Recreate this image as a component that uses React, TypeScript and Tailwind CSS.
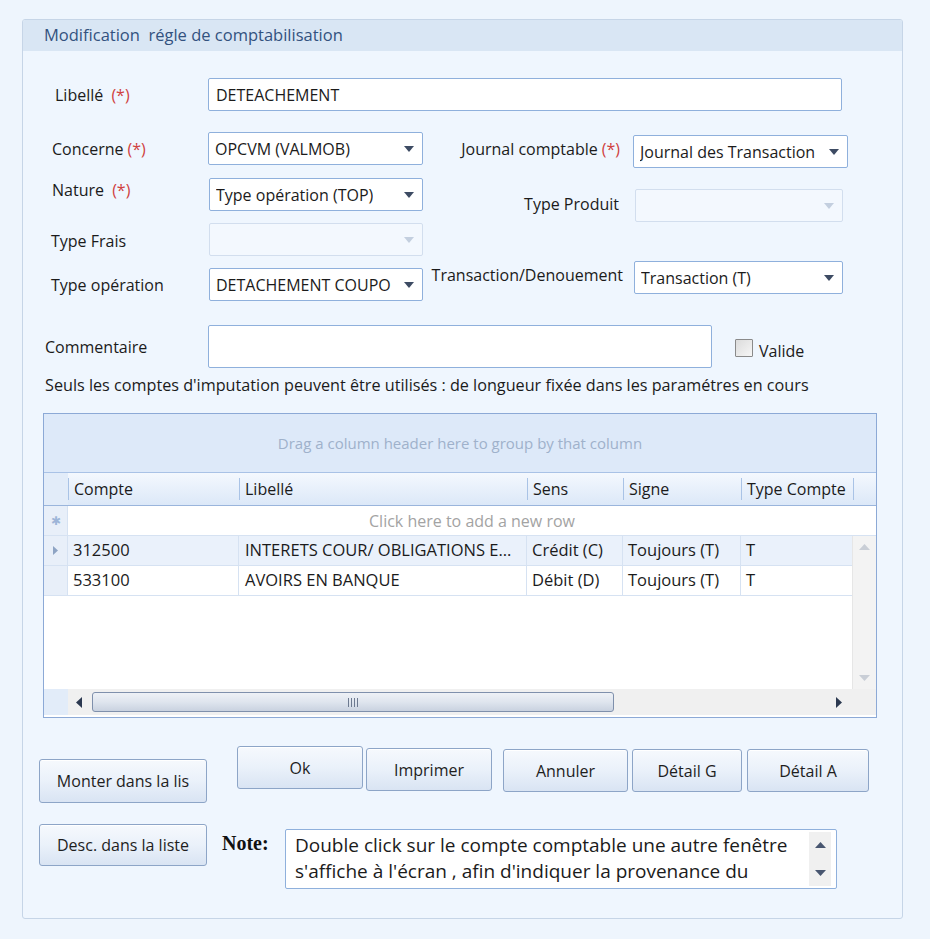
import React from 'react';

const font = { fontFamily: '"Open Sans", "Noto Sans", sans-serif' };

const Req = () => <span className="text-[#d0413e] ml-1">(*)</span>;

const Arrow = ({ disabled }: { disabled?: boolean }) => (
  <svg width="10" height="6" viewBox="0 0 10 6" className="shrink-0">
    <path d="M0 0 L10 0 L5 6 Z" fill={disabled ? '#c3cfdf' : '#3d4b63'} />
  </svg>
);

const Select = ({ value, w, disabled }: { value?: string; w: string; disabled?: boolean }) => (
  <div
    className={`${w} h-[33px] flex items-center justify-between pl-[6px] pr-[8px] rounded-[2px] border ${
      disabled ? 'bg-[#f3f8fe] border-[#d2deee]' : 'bg-white border-[#8fb0dc]'
    }`}
  >
    <span className="text-[16px] text-[#1b1b1b] whitespace-nowrap overflow-hidden">{value}</span>
    <Arrow disabled={disabled} />
  </div>
);

const Btn = ({ label, w, h = 'h-[43px]' }: { label: string; w: string; h?: string }) => (
  <div
    className={`${w} ${h} flex items-center justify-center rounded-[3px] border border-[#8da5c7] bg-gradient-to-b from-[#f6f9fd] via-[#eaf1fa] to-[#d9e4f3] text-[16px] text-[#1e1e1e] shadow-[inset_0_1px_0_#ffffff]`}
  >
    {label}
  </div>
);

const cols = 'grid grid-cols-[24px_171px_288px_96px_118px_112px_1fr]';

export default function App() {
  const rows = [
    { c: '312500', l: 'INTERETS COUR/ OBLIGATIONS E...', s: 'Crédit (C)', g: 'Toujours (T)', t: 'T', sel: true },
    { c: '533100', l: 'AVOIRS EN BANQUE', s: 'Débit (D)', g: 'Toujours (T)', t: 'T', sel: false },
  ];
  return (
    <div className="w-[930px] h-[939px] bg-[#eef5fd] pt-[19px] pl-[22px]" style={font}>
      <div className="w-[881px] h-[900px] rounded-[3px] border border-[#c6d5e7] bg-[#eff6fe] overflow-hidden">
        <div className="h-[31px] bg-[#d9e6f4] flex items-center pl-[21px] text-[16.5px] text-[#33527f]">
          Modification&nbsp;&nbsp;régle de comptabilisation
        </div>

        {/* Libellé */}
        <div className="flex items-center mt-[27px] h-[33px]">
          <div className="w-[185px] pl-[32px] text-[16px] text-[#1b1b1b]">
            Libellé <Req />
          </div>
          <div className="w-[634px] h-[33px] bg-white border border-[#8fb0dc] rounded-[2px] flex items-center pl-[7px] text-[16px] text-[#1b1b1b]">
            DETEACHEMENT
          </div>
        </div>

        <div className="flex mt-[21px]">
          {/* left column */}
          <div className="w-[402px] flex flex-col">
            <div className="flex items-center h-[33px]">
              <div className="w-[185px] pl-[29px] text-[16px] text-[#1b1b1b]">
                Concerne<Req />
              </div>
              <Select value="OPCVM (VALMOB)" w="w-[215px]" />
            </div>
            <div className="flex h-[33px] mt-[13px]">
              <div className="w-[186px] pl-[29px] text-[16px] text-[#1b1b1b]">
                Nature <Req />
              </div>
              <Select value="Type opération (TOP)" w="w-[214px]" />
            </div>
            <div className="flex items-center h-[33px] mt-[12px]">
              <div className="w-[186px] pl-[28px] text-[16px] text-[#1b1b1b] pt-[2px]">Type Frais</div>
              <Select w="w-[214px]" disabled />
            </div>
            <div className="flex items-center h-[33px] mt-[12px]">
              <div className="w-[186px] pl-[28px] text-[16px] text-[#1b1b1b]">Type opération</div>
              <Select value="DETACHEMENT COUPO" w="w-[214px]" />
            </div>
          </div>

          {/* right column */}
          <div className="flex flex-col">
            <div className="flex items-center h-[33px] mt-[3px]">
              <div className="w-[208px] pr-[13px] text-right text-[16px] text-[#1b1b1b] -mt-[6px] whitespace-nowrap">
                Journal comptable<Req />
              </div>
              <Select value="Journal des Transaction" w="w-[215px]" />
            </div>
            <div className="flex items-center h-[33px] mt-[21px]">
              <div className="w-[210px] pr-[16px] text-right text-[16px] text-[#1b1b1b] -mt-[4px]">Type Produit</div>
              <Select w="w-[208px]" disabled />
            </div>
            <div className="flex items-center h-[33px] mt-[39px]">
              <div className="w-[209px] pr-[11px] text-right text-[16px] text-[#1b1b1b] -mt-[5px] whitespace-nowrap">
                Transaction/Denouement
              </div>
              <Select value="Transaction (T)" w="w-[209px]" />
            </div>
          </div>
        </div>

        {/* Commentaire */}
        <div className="flex items-center mt-[24px]">
          <div className="w-[185px] pl-[22px] text-[16px] text-[#1b1b1b]">Commentaire</div>
          <div className="w-[504px] h-[43px] bg-white border border-[#8fb0dc] rounded-[2px]" />
          <div className="flex items-center ml-[23px] mt-[2px]">
            <div className="w-[18px] h-[18px] border border-[#8a8a8a] bg-gradient-to-br from-[#dcdcdc] to-[#f6f6f6] rounded-[1px]" />
            <span className="ml-[6px] text-[16px] text-[#1b1b1b] mt-[6px]">Valide</span>
          </div>
        </div>

        <div className="mt-[5px] pl-[22px] text-[16.2px] text-[#1b1b1b] whitespace-nowrap">
          Seuls les comptes d'imputation peuvent être utilisés : de longueur fixée dans les paramétres en cours
        </div>

        {/* Grid */}
        <div className="ml-[20px] mt-[16px] w-[834px] h-[305px] border border-[#8ca9d6] bg-white flex flex-col">
          <div className="h-[59px] bg-[#dde9f9] border-b border-[#a9c2e6] flex items-center justify-center text-[15px] text-[#9fb1cb]">
            Drag a column header here to group by that column
          </div>
          <div className={`${cols} h-[33px] bg-gradient-to-b from-[#f4f8fe] to-[#dce8f8] border-b border-[#9ab5dc] text-[16px] text-[#1b1b1b]`}>
            <div className="bg-[#e2ecf9]" />
            {['Compte', 'Libellé', 'Sens', 'Signe', 'Type Compte'].map((h) => (
              <div key={h} className="flex items-center">
                <div className="w-px h-[22px] bg-[#a9c3e6] mr-[5px]" />
                <span className="whitespace-nowrap">{h}</span>
              </div>
            ))}
            <div className="flex items-center">
              <div className="w-px h-[22px] bg-[#a9c3e6]" />
            </div>
          </div>
          <div className="flex h-[30px] border-b border-[#d6e2f2]">
            <div className="w-[24px] bg-[#e8eff9] border-r border-[#d6e2f2] flex items-center justify-center text-[#9db5d8] text-[12px]">
              ✱
            </div>
            <div className="flex-1 flex items-center justify-center text-[16px] text-[#a3a3a3]">
              Click here to add a new row
            </div>
          </div>
          <div className="flex h-[153px]">
            <div className="w-[808px] flex flex-col">
              {rows.map((r) => (
                <div
                  key={r.c}
                  className={`grid grid-cols-[24px_171px_288px_96px_118px_111px] h-[30px] border-b border-[#d6e2f2] text-[16.5px] text-[#1b1b1b] ${
                    r.sel ? 'bg-[#eaf1fb]' : 'bg-white'
                  }`}
                >
                  <div className="bg-[#e8eff9] border-r border-[#d6e2f2] flex items-center justify-center">
                    {r.sel && (
                      <svg width="5" height="9" viewBox="0 0 5 9">
                        <path d="M0 0 L5 4.5 L0 9 Z" fill="#8ea4c4" />
                      </svg>
                    )}
                  </div>
                  <div className="flex items-center pl-[5px] border-r border-[#d6e2f2]">{r.c}</div>
                  <div className="flex items-center pl-[6px] border-r border-[#d6e2f2] whitespace-nowrap overflow-hidden">{r.l}</div>
                  <div className="flex items-center pl-[5px] border-r border-[#d6e2f2] whitespace-nowrap">{r.s}</div>
                  <div className="flex items-center pl-[5px] border-r border-[#d6e2f2] whitespace-nowrap">{r.g}</div>
                  <div className="flex items-center pl-[5px]">{r.t}</div>
                </div>
              ))}
            </div>
            <div className="flex-1 bg-[#f3f3f3] border-l border-[#e6e6e6] flex flex-col items-center justify-between py-[8px]">
              <svg width="11" height="6" viewBox="0 0 11 6">
                <path d="M0 6 L5.5 0 L11 6 Z" fill="#c9ced6" />
              </svg>
              <svg width="11" height="6" viewBox="0 0 11 6">
                <path d="M0 0 L5.5 6 L11 0 Z" fill="#c9ced6" />
              </svg>
            </div>
          </div>
          <div className="flex h-[26px]">
            <div className="w-[24px] bg-[#e2ecf9]" />
            <div className="flex-1 bg-[#f0f0f0] flex items-center">
              <svg width="6" height="11" viewBox="0 0 6 11" className="ml-[8px]">
                <path d="M6 0 L0 5.5 L6 11 Z" fill="#2c3950" />
              </svg>
              <div className="ml-[10px] w-[522px] h-[20px] rounded-[3px] border border-[#7f90ac] bg-gradient-to-b from-[#eef1f6] via-[#dfe5ee] to-[#c9d2e0] flex items-center justify-center">
                <div className="flex gap-[2px]">
                  {[0, 1, 2, 3].map((i) => (
                    <div key={i} className="w-px h-[9px] bg-[#6d7a90]" />
                  ))}
                </div>
              </div>
              <svg width="6" height="11" viewBox="0 0 6 11" className="ml-auto mr-[34px]">
                <path d="M0 0 L6 5.5 L0 11 Z" fill="#2c3950" />
              </svg>
            </div>
          </div>
        </div>

        {/* Buttons */}
        <div className="flex mt-[28px] pl-[16px]">
          <div className="mt-[13px]">
            <Btn label="Monter dans la lis" w="w-[168px]" h="h-[44px]" />
          </div>
          <div className="ml-[30px]">
            <Btn label="Ok" w="w-[126px]" />
          </div>
          <div className="ml-[3px] mt-[2px]">
            <Btn label="Imprimer" w="w-[126px]" />
          </div>
          <div className="ml-[11px] mt-[3px]">
            <Btn label="Annuler" w="w-[125px]" />
          </div>
          <div className="ml-[4px] mt-[3px]">
            <Btn label="Détail G" w="w-[110px]" />
          </div>
          <div className="ml-[5px] mt-[3px]">
            <Btn label="Détail A" w="w-[122px]" />
          </div>
        </div>

        <div className="flex mt-[21px] pl-[16px]">
          <Btn label="Desc. dans la liste" w="w-[168px]" h="h-[42px]" />
          <div
            className="ml-[15px] mt-[4px] w-[49px] text-[20px] font-bold text-[#111] whitespace-nowrap"
            style={{ fontFamily: '"Liberation Serif", serif' }}
          >
            Note:
          </div>
          <div className="ml-[14px] mt-[5px] w-[552px] h-[60px] bg-white border border-[#8fb0dc] rounded-[2px] flex">
            <div className="flex-1 pl-[9px] pt-[2px] text-[19px] leading-[26px] text-[#1b1b1b] overflow-hidden">
              Double click sur le compte comptable une autre fenêtre s'affiche à l'écran , afin d'indiquer la provenance du
            </div>
            <div className="w-[22px] mr-[5px] my-[2px] bg-[#f0f0f0] flex flex-col items-center justify-between py-[10px]">
              <svg width="11" height="6" viewBox="0 0 11 6">
                <path d="M0 6 L5.5 0 L11 6 Z" fill="#485670" />
              </svg>
              <svg width="11" height="6" viewBox="0 0 11 6">
                <path d="M0 0 L5.5 6 L11 0 Z" fill="#485670" />
              </svg>
            </div>
          </div>
        </div>
      </div>
    </div>
  );
}
